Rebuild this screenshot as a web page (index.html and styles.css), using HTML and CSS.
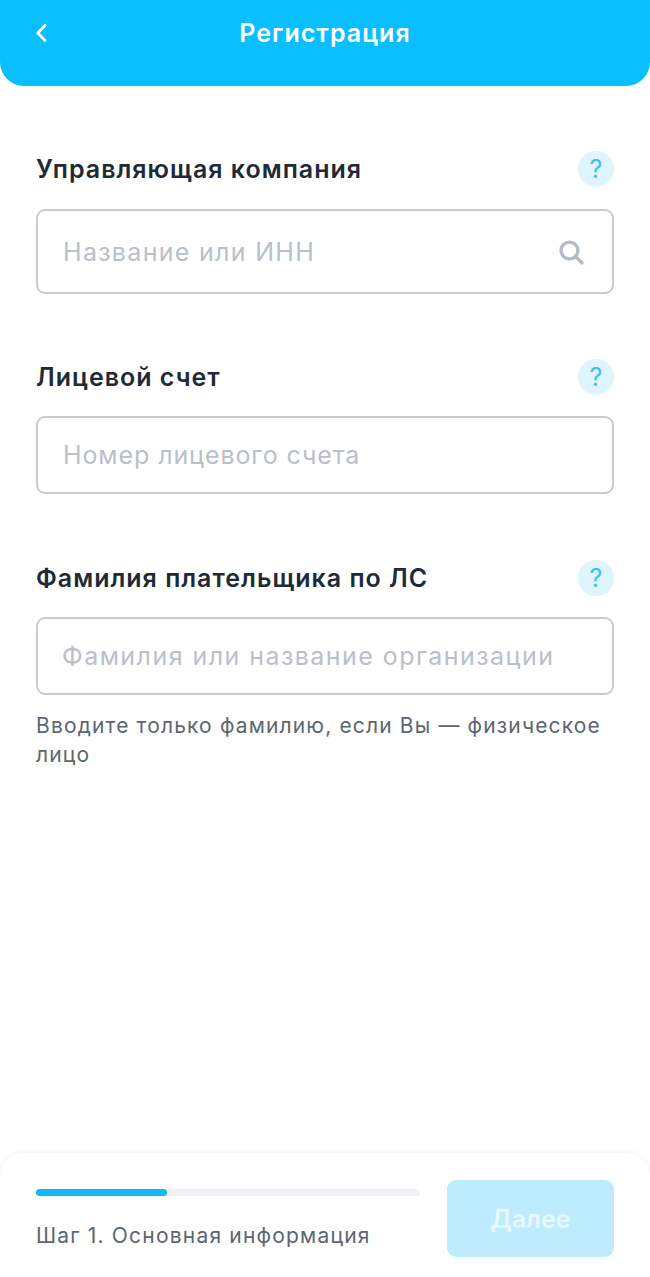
FILE: index.html
```html
<!DOCTYPE html>
<html lang="ru">
<head>
  <meta charset="UTF-8">
  <meta name="viewport" content="width=device-width, initial-scale=1.0">
  <title>Регистрация</title>
  <link rel="stylesheet" href="styles.css">
</head>
<body>
  <div class="app">
    <div class="header">
      <button class="back-btn" aria-label="Назад">
        <svg width="14" height="20" viewBox="0 0 14 20" fill="none"><path d="M11 2.5 3.8 10l7.2 7.5" stroke="#fff" stroke-width="2.8" stroke-linecap="round" stroke-linejoin="round"/></svg>
      </button>
      <h1 class="header-title">Регистрация</h1>
    </div>

    <div class="main">
      <div class="field field-company">
        <div class="field-head">
          <span class="field-label">Управляющая компания</span>
          <span class="help">?</span>
        </div>
        <div class="input input-tall">
          <span class="placeholder">Название или ИНН</span>
          <svg class="search-icon" width="26" height="26" viewBox="0 0 26 26" fill="none"><circle cx="11.5" cy="11.5" r="8.4" stroke="#b4bcc5" stroke-width="3.4"/><path d="m17.8 17.8 6 6" stroke="#b4bcc5" stroke-width="3.6" stroke-linecap="round"/></svg>
        </div>
      </div>

      <div class="field field-account">
        <div class="field-head">
          <span class="field-label">Лицевой счет</span>
          <span class="help">?</span>
        </div>
        <div class="input">
          <span class="placeholder placeholder-narrow">Номер лицевого счета</span>
        </div>
      </div>

      <div class="field field-name">
        <div class="field-head">
          <span class="field-label">Фамилия плательщика по ЛС</span>
          <span class="help">?</span>
        </div>
        <div class="input">
          <span class="placeholder placeholder-wide">Фамилия или название организации</span>
        </div>
        <p class="hint">Вводите только фамилию, если Вы — физическое лицо</p>
      </div>
    </div>

    <div class="footer">
      <div class="steps">
        <div class="progress"><div class="progress-bar"></div></div>
        <div class="step-name">Шаг 1. Основная информация</div>
      </div>
      <button class="btn-next">Далее</button>
    </div>
  </div>
</body>
</html>
```

FILE: styles.css
```css
* {
  box-sizing: border-box;
  margin: 0;
  padding: 0;
}

:root {
  --primary: #09bfff;
  --text: #1f2a37;
  --gray-text: #5c6670;
  --placeholder: #b9c0c9;
  --border: #c6ccd2;
}

body {
  font-family: Inter, "Noto Sans", sans-serif;
  background-color: #fff;
  color: var(--text);
}

.app {
  width: 650px;
  height: 1277px;
  display: flex;
  flex-direction: column;
}

/* Header */
.header {
  height: 86px;
  flex-shrink: 0;
  background-color: var(--primary);
  border-radius: 0 0 24px 24px;
  display: flex;
  justify-content: center;
  padding-top: 18px;
  position: relative;
}

.back-btn {
  position: absolute;
  left: 34px;
  top: 23px;
  background: none;
  border: none;
  display: flex;
}

.header-title {
  font-size: 25px;
  line-height: 30px;
  font-weight: 600;
  letter-spacing: 1px;
  color: #fff;
}

/* Form */
.main {
  flex: 1;
  padding: 0 36px;
}

.field {
  margin-top: 65px;
}

.field-name {
  margin-top: 66px;
}

.field-head {
  display: flex;
  justify-content: space-between;
  align-items: center;
  height: 36px;
  margin-bottom: 21px;
}

.field-company .field-head {
  margin-bottom: 22px;
}

.field-label {
  font-size: 25px;
  font-weight: 600;
  letter-spacing: 1px;
  color: var(--text);
}

.help {
  width: 36px;
  height: 36px;
  border-radius: 50%;
  background-color: #dff5fc;
  color: #3cc3e8;
  font-size: 25px;
  font-weight: 400;
  display: flex;
  align-items: center;
  justify-content: center;
}

.input {
  height: 78px;
  border: 2px solid var(--border);
  border-radius: 9px;
  display: flex;
  align-items: center;
  justify-content: space-between;
  padding: 0 28px 0 25px;
}

.input-tall {
  height: 85px;
}

.placeholder {
  font-size: 25px;
  letter-spacing: 1.3px;
  color: var(--placeholder);
}

.placeholder-narrow {
  letter-spacing: 0.9px;
}

.placeholder-wide {
  letter-spacing: 1.45px;
  margin-left: -1px;
}

.hint {
  margin-top: 16px;
  font-size: 21px;
  line-height: 29px;
  letter-spacing: 1.15px;
  color: var(--gray-text);
}

/* Footer */
.footer {
  height: 124px;
  flex-shrink: 0;
  border-radius: 24px 24px 0 0;
  box-shadow: 0 -1px 6px rgba(0, 0, 0, 0.05);
  display: flex;
  justify-content: space-between;
  padding: 27px 36px 0;
}

.steps {
  width: 384px;
  padding-top: 9px;
}

.progress {
  height: 7px;
  border-radius: 4px;
  background-color: #eff1f4;
}

.progress-bar {
  width: 34%;
  height: 100%;
  border-radius: 4px;
  background-color: #12b9f3;
}

.step-name {
  margin-top: 26px;
  font-size: 21px;
  line-height: 28px;
  letter-spacing: 1.2px;
  color: var(--gray-text);
}

.btn-next {
  width: 167px;
  height: 77px;
  border: none;
  border-radius: 9px;
  background-color: #bdecfe;
  color: #e8f8ff;
  font-family: inherit;
  font-size: 25px;
  font-weight: 600;
}
```
